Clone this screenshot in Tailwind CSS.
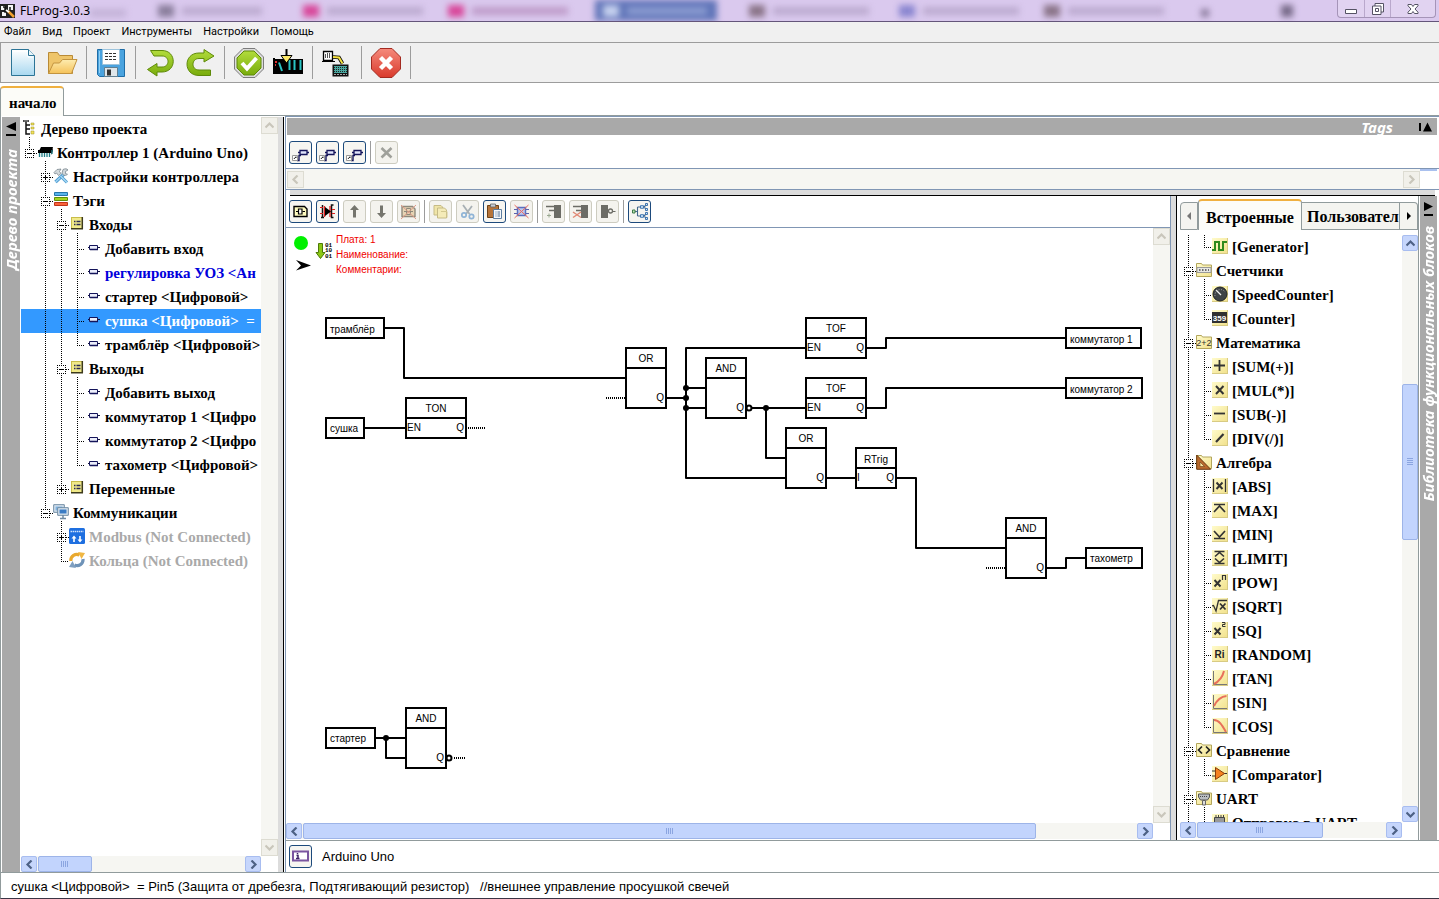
<!DOCTYPE html>
<html lang="ru">
<head>
<meta charset="utf-8">
<title>FLProg-3.0.3</title>
<script src="https://cdn.jsdelivr.net/npm/@tailwindcss/browser@4"></script>
</head>
<body class="flex h-screen flex-col overflow-hidden bg-white text-black">

<!-- Shared gradients -->
<svg class="absolute size-0" aria-hidden="true">
  <defs>
    <linearGradient id="gPage" x1="0" y1="0" x2="0" y2="1"><stop offset="0" stop-color="#fff"/><stop offset="1" stop-color="#a9d8f0"/></linearGradient>
    <linearGradient id="gFold" x1="0" y1="0" x2="0" y2="1"><stop offset="0" stop-color="#fdecb0"/><stop offset="1" stop-color="#f5c25a"/></linearGradient>
    <linearGradient id="gGreen" x1="0" y1="0" x2="0" y2="1"><stop offset="0" stop-color="#b2dc3c"/><stop offset="1" stop-color="#79ac0c"/></linearGradient>
    <linearGradient id="gRed" x1="0" y1="0" x2="0" y2="1"><stop offset="0" stop-color="#f58a7c"/><stop offset="1" stop-color="#d93a2c"/></linearGradient>
    <linearGradient id="gPad" x1="0" y1="0" x2="1" y2="1"><stop offset="0" stop-color="#fffbcb"/><stop offset="1" stop-color="#f2e28e"/></linearGradient>
  </defs>
</svg>

<!-- Icon library -->
<svg class="hidden" aria-hidden="true">
  <symbol id="c-left" viewBox="0 0 9 9"><path d="M6.500 .5 2.500 4.500l4 4" fill="none" stroke="currentColor" stroke-width="2.200"/></symbol>
  <symbol id="c-right" viewBox="0 0 9 9"><path d="m2.500 .5 4 4-4 4" fill="none" stroke="currentColor" stroke-width="2.200"/></symbol>
  <symbol id="c-up" viewBox="0 0 9 9"><path d="m.5 6.500 4-4 4 4" fill="none" stroke="currentColor" stroke-width="2.200"/></symbol>
  <symbol id="c-down" viewBox="0 0 9 9"><path d="m.5 2.500 4 4 4-4" fill="none" stroke="currentColor" stroke-width="2.200"/></symbol>

  <!-- guide cells of the trees, 16x24 -->
  <symbol id="g-v" viewBox="0 0 16 24"><path d="M8.500 0v24" stroke="#000" stroke-dasharray="1 1" shape-rendering="crispEdges"/></symbol>
  <symbol id="g-t" viewBox="0 0 16 24"><path d="M8.500 0v24M8 12.500h8" stroke="#000" stroke-dasharray="1 1" shape-rendering="crispEdges"/></symbol>
  <symbol id="g-l" viewBox="0 0 16 24"><path d="M8.500 0v12M8 12.500h8" stroke="#000" stroke-dasharray="1 1" shape-rendering="crispEdges"/></symbol>
  <symbol id="g-box" viewBox="0 0 16 24"><path d="M4 8.500h9M4 16.500h9M4.500 8v9M12.500 8v9M13 12.500h3" fill="none" stroke="#000" stroke-dasharray="1 1" shape-rendering="crispEdges"/><path d="M6 12.500h5" stroke="#000" shape-rendering="crispEdges"/></symbol>
  <symbol id="g-n" viewBox="0 0 16 24"><path d="M8.500 0v8" stroke="#000" stroke-dasharray="1 1" shape-rendering="crispEdges"/><use href="#g-box"/></symbol>
  <symbol id="g-m" viewBox="0 0 16 24"><path d="M8.500 0v8M8.500 16v8" stroke="#000" stroke-dasharray="1 1" shape-rendering="crispEdges"/><use href="#g-box"/></symbol>
  <symbol id="g-p" viewBox="0 0 16 24"><use href="#g-m"/><path d="M8.500 10v5" stroke="#000" shape-rendering="crispEdges"/></symbol>
  <symbol id="g-q" viewBox="0 0 16 24"><use href="#g-n"/><path d="M8.500 10v5" stroke="#000" shape-rendering="crispEdges"/></symbol>

  <!-- project tree icons -->
  <symbol id="i-root" viewBox="0 0 16 16"><path d="M2 1h6M5 1v13h4M5 5h4M5 9h4" fill="none" stroke="#111" stroke-width="1.500"/><path d="M3 1h4" stroke="#999"/><path d="M10 3h3v2h-3zM10 7h3v2h-3zM10 11h3v3h-3z" fill="#f4e35c" stroke="#9a8c20" stroke-width=".5"/></symbol>
  <symbol id="i-chip" viewBox="0 0 16 16"><path d="M4 3h12l-2 6H1z" fill="#000"/><path d="M1 6h14v3H1z" fill="#000"/><path d="M16 3v4l-2 4v-2" fill="#222"/><path d="M2.500 9v4M5 9v4M7.500 9v4M10 9v4M12.500 9v4M15 6v4" stroke="#1f7d86" stroke-width="1.300"/></symbol>
  <symbol id="i-tools" viewBox="0 0 16 16"><path d="M2.500 14 11 6" stroke="#4f9bd0" stroke-width="3.400"/><path d="M2.500 14 11 6" stroke="#9ed3f3" stroke-width="1.500"/><path d="M10 1.500c2-1 4-1 5 .5L12.500 3.500v2l2 .8c-2 2-5 1-5.500-1.300z" fill="#cfd6da" stroke="#6d7b84" stroke-width=".7"/><path d="M1 4.500 4 1.500 8 1 6.500 3.500 8 5.500 5.500 7.500 3.500 5 2 6z" fill="#d4dadd" stroke="#6d7b84" stroke-width=".7"/><path d="m7.500 8 6.500 6.500" stroke="#4f9bd0" stroke-width="3"/><path d="m7.500 8 6.500 6.500" stroke="#aadcf6" stroke-width="1.300"/></symbol>
  <symbol id="i-tags" viewBox="0 0 16 16"><path d="M1.500 .5h13v3h-13z" fill="#59b4ea" stroke="#2475ab"/><path d="M1.500 5.500h13v3h-13z" fill="#a3d41d" stroke="#5e8f09"/><path d="M1.500 10.500h13v3h-13z" fill="#f8643a" stroke="#c0341a"/></symbol>
  <symbol id="i-list" viewBox="0 0 16 16"><path d="M2 1h12v12H2z" fill="#f1ea8a"/><path d="M2 1.500h11.500M2.500 1v11" stroke="#c9bd4a"/><path d="M2 12.700h12M13.300 1v12" stroke="#3d3a1c" stroke-width="1.500"/><path d="M5 5.500h1.500M5 8.500h1.500M7.500 5.500h4M7.500 8.500h4" stroke="#2a2a55" stroke-width="1.300"/></symbol>
  <symbol id="i-pin" viewBox="0 0 16 16"><path d="M3 7.500h2M12 7.500h3" stroke="#14143c"/><path d="M4.500 5.500h8v4h-8z" fill="#eceefb" stroke="#14145a"/><path d="M5 9.500h8" stroke="#14145a" stroke-width="1.500"/></symbol>
  <symbol id="i-comm" viewBox="0 0 16 16"><path d="M.7 .7h10.600v7.600H.7z" fill="#dbe6ef" stroke="#6e8aa3"/><path d="M2.500 2.500h7v4h-7z" fill="#7fb2e0"/><path d="M4.700 3.700h10.600v7.600H4.700z" fill="#dbe6ef" stroke="#6e8aa3"/><path d="M6.500 5.500h7v4h-7z" fill="#3b7cc4"/><path d="M7 14.500h6M10 11v3" stroke="#6e8aa3" stroke-width="1.500"/></symbol>
  <symbol id="i-modbus" viewBox="0 0 16 16"><rect width="16" height="16" rx="1.500" fill="#1e6fe0"/><path d="M1.500 3.500h13" stroke="#cfe2fb" stroke-width="1.600" stroke-dasharray="1.500 .6"/><path d="M5 14V9M11 8v5" stroke="#fff" stroke-width="1.600"/><path d="M2.500 10.500 5 7.500l2.500 3zM8.500 11.500l2.500 3 2.500-3z" fill="#fff"/></symbol>
  <symbol id="i-ring" viewBox="0 0 16 16"><path d="M1.800 9C1.500 4 6.500 1 10.500 3.200" fill="none" stroke="#e9a92f" stroke-width="3.200"/><path d="m9 0 7 1-3.500 6z" fill="#f0b743"/><path d="M14 7C14.500 12 9.500 15 5.500 12.800" fill="none" stroke="#6f93b8" stroke-width="3.200"/><path d="m7 16-7-1 3.500-6z" fill="#7f9fc0"/></symbol>

  <!-- library icons -->
  <symbol id="pad" viewBox="0 0 16 16"><path d="M0 0h15v15H0z" fill="url(#gPad)"/><path d="M0 15.500h16M15.500 0v16" stroke="#d8cb84"/></symbol>
  <symbol id="folder" viewBox="0 0 16 16"><path d="M.5 1.500h5l1 1.500h9v11.500H.5z" fill="url(#gPad)" stroke="#b3a65c"/></symbol>
  <symbol id="l-gen" viewBox="0 0 16 16"><use href="#pad"/><path d="M0 12h3V4h4v8h4V4h4" fill="none" stroke="#2f8a1c" stroke-width="2"/></symbol>
  <symbol id="l-count" viewBox="0 0 16 16"><use href="#folder"/><path d="M1 5.500h14v5H1z" fill="#e8e8e4" stroke="#999"/><path d="M3 8h10" stroke="#444" stroke-width="1.500" stroke-dasharray="1.500 1.500"/></symbol>
  <symbol id="l-speed" viewBox="0 0 16 16"><use href="#pad"/><circle cx="8" cy="8" r="7" fill="#3d4246" stroke="#1e2124"/><path d="M4 4l5 5" stroke="#f2f2f2" stroke-width="1.300"/><path d="M3 10A5.500 5.500 0 0 1 13 6" fill="none" stroke="#aaa" stroke-dasharray="1 1.500"/></symbol>
  <symbol id="l-359" viewBox="0 0 16 16"><use href="#pad"/><path d="M0 2h15v11H0z" fill="#303030"/><text x="7.500" y="11" text-anchor="middle" font-family="Liberation Sans" font-weight="700" font-size="8" fill="#fff">359</text></symbol>
  <symbol id="l-math" viewBox="0 0 16 16"><use href="#folder"/><text x="8" y="12" text-anchor="middle" font-family="Liberation Sans" font-weight="400" font-size="9" fill="#333">2+2</text></symbol>
  <symbol id="l-sum" viewBox="0 0 16 16"><use href="#pad"/><path d="M2 7.500h11M7.500 2v11" stroke="#333" stroke-width="1.800"/></symbol>
  <symbol id="l-mul" viewBox="0 0 16 16"><use href="#pad"/><path d="m4 4 7.500 8M11.500 4 4 12" stroke="#333" stroke-width="2"/></symbol>
  <symbol id="l-sub" viewBox="0 0 16 16"><use href="#pad"/><path d="M2 7.500h11" stroke="#333" stroke-width="1.800"/></symbol>
  <symbol id="l-div" viewBox="0 0 16 16"><use href="#pad"/><path d="m4 12 7.500-8" stroke="#333" stroke-width="2.200"/></symbol>
  <symbol id="l-alg" viewBox="0 0 16 16"><use href="#folder"/><path d="M.7 1v14.300h14z" fill="#b96a2c" stroke="#6b3a12"/><path d="M4 8v4.500h4.500z" fill="#f5e6a0" stroke="#6b3a12" stroke-width=".6"/></symbol>
  <symbol id="l-abs" viewBox="0 0 16 16"><use href="#pad"/><path d="M1.500 1v13M13.500 1v13" stroke="#333" stroke-width="1.300"/><path d="m4.500 4.500 6 6.500M10.500 4.500l-6 6.500" stroke="#333" stroke-width="1.900"/></symbol>
  <symbol id="l-max" viewBox="0 0 16 16"><use href="#pad"/><path d="M2 2.500h11M2 10l5.500-6 5.500 6" fill="none" stroke="#333" stroke-width="1.700"/></symbol>
  <symbol id="l-min" viewBox="0 0 16 16"><use href="#pad"/><path d="M2 12.500h11M2 5l5.500 6L13 5" fill="none" stroke="#333" stroke-width="1.700"/></symbol>
  <symbol id="l-lim" viewBox="0 0 16 16"><use href="#pad"/><path d="M2.500 1.500h10M2.500 13.500h10M3 6.500l4.500-4 4.500 4M3 8.500l4.500 4 4.500-4" fill="none" stroke="#333" stroke-width="1.600"/></symbol>
  <symbol id="l-pow" viewBox="0 0 16 16"><use href="#pad"/><path d="m2.500 6 6 6.500M8.500 6l-6 6.500" stroke="#333" stroke-width="1.900"/><path d="M10.500 6V1.500h3V6" fill="none" stroke="#333" stroke-width="1.200"/></symbol>
  <symbol id="l-sqrt" viewBox="0 0 16 16"><use href="#pad"/><path d="m0 8 1.500-.5L4 13 6.500 2.500H15" fill="none" stroke="#333" stroke-width="1.300"/><path d="m8 5.500 5.500 6M13.500 5.500l-5.500 6" stroke="#333" stroke-width="1.800"/></symbol>
  <symbol id="l-sq" viewBox="0 0 16 16"><use href="#pad"/><path d="m2.500 6 6 6.500M8.500 6l-6 6.500" stroke="#333" stroke-width="1.900"/><path d="M10 .5h3v2h-2.500v2h3" fill="none" stroke="#333"/></symbol>
  <symbol id="l-ri" viewBox="0 0 16 16"><use href="#pad"/><text x="7.500" y="11.500" text-anchor="middle" font-family="Liberation Sans" font-weight="700" font-size="10" fill="#222">Ri</text></symbol>
  <symbol id="l-tan" viewBox="0 0 16 16"><use href="#pad"/><path d="M1.500 1v13.500H15" fill="none" stroke="#777"/><path d="M2 14C6 12 10 9 12 1" fill="none" stroke="#e8705a" stroke-width="2"/></symbol>
  <symbol id="l-sin" viewBox="0 0 16 16"><use href="#pad"/><path d="M1.500 1v13.500H15" fill="none" stroke="#777"/><path d="M2 12C4 8 8 2.500 14.500 2" fill="none" stroke="#e8705a" stroke-width="2"/></symbol>
  <symbol id="l-cos" viewBox="0 0 16 16"><use href="#pad"/><path d="M1.500 1v13.500H15" fill="none" stroke="#777"/><path d="M2 2c5 0 8 5 12 12" fill="none" stroke="#e8705a" stroke-width="2"/></symbol>
  <symbol id="l-cmp" viewBox="0 0 16 16"><use href="#folder"/><path d="M6 4.500 2.500 8 6 11.500M10 4.500 13.500 8 10 11.500" fill="none" stroke="#222" stroke-width="1.700"/></symbol>
  <symbol id="l-comp" viewBox="0 0 16 16"><use href="#pad"/><path d="M0 5h3M0 10h3M12 7.500h3" stroke="#333"/><path d="M3.500 1.500v12l9-6z" fill="#f58220" stroke="#8a3c08"/></symbol>
  <symbol id="l-uart" viewBox="0 0 16 16"><use href="#folder"/><path d="M2.500 4h11v3l-2 3h-7l-2-3z" fill="#b9bdc1" stroke="#555"/><path d="M4 6.500h8" stroke="#444" stroke-dasharray="1 1"/><path d="M6.500 10.500h3V15h-3z" fill="#ddd" stroke="#666"/></symbol>
  <symbol id="l-send" viewBox="0 0 16 16"><use href="#pad"/><path d="M2.500 3.500h10v8h-10z" fill="#999" stroke="#444"/><path d="M4 1v3M6.500 1v3M9 1v3M11.500 1v3" stroke="#444"/></symbol>

  <!-- small toolbar icons -->
  <symbol id="b-tag" viewBox="0 0 19 19"><path d="M7 9.500h3M15 9.500h3M10 12.500H8v5H6" fill="none" stroke="#14145a" stroke-width="1.400"/><path d="M9 7.500h7v4H9z" fill="#dfe3fa" stroke="#14145a" stroke-width="1.300"/><path d="M1.500 12.500h5v5h-5z" fill="#fff" stroke="#999"/><path d="M3 16c1-2 2-2 2.500-1M4 14.500l1.500-.5" fill="none" stroke="#222"/></symbol>
  <symbol id="b-x" viewBox="0 0 19 19"><path d="m4.500 5 10 9.500M14.500 5l-10 9.500" stroke="#a0a19b" stroke-width="2.600"/></symbol>
  <symbol id="b-sheet" viewBox="0 0 19 19"><path d="M3 4.500h10.500l2.500 2.500v7.500H3z" fill="#fffbc0" stroke="#000" stroke-width="1.400"/><path d="M5 9.500h2M11.500 9.500h2.500" stroke="#000"/><path d="M7.500 7h3.500v5H7.500z" fill="#fff" stroke="#000" stroke-width="1.200"/></symbol>
  <symbol id="b-mux" viewBox="0 0 19 19"><path d="M4.500 3v12.500M3 15.500h3M15.500 3h-2v12.500h2" fill="none" stroke="#111" stroke-width="1.500"/><path d="M6.500 4v11M12 4v11" stroke="#e02020" stroke-width="1.300"/><path d="m7 5 6 4.500-6 4.500z" fill="#000"/><path d="M2 5.500h3M2 11.500h3M14 7.500h3M14 11.500h3" stroke="#e02020"/></symbol>
  <symbol id="b-up" viewBox="0 0 19 19"><path d="M9.500 3 14 8h-3v7.500H8V8H5z" fill="#75756d"/></symbol>
  <symbol id="b-dn" viewBox="0 0 19 19"><path d="M9.500 16 14 11h-3V3.500H8V11H5z" fill="#75756d"/></symbol>
  <symbol id="b-delsheet" viewBox="0 0 19 19"><path d="M3 4.500h10.500l2.500 2.500v7.500H3z" fill="#e6d4b4" stroke="#8f8a7c" stroke-width="1.400"/><path d="M5 9.500h9M7.500 6.500h4v6h-4z" fill="none" stroke="#8f8a7c"/><path d="m2 3 15 14M17 3 2 17" stroke="#df9a86"/></symbol>
  <symbol id="b-copy" viewBox="0 0 19 19"><path d="M3 3.500h7l1.500 1.500v8H3z" fill="#f0e5a8" stroke="#c6bb86"/><path d="M6.500 6h7l2 2v8h-9z" fill="#f4ebb8" stroke="#c6bb86"/><path d="M10 9.500h6v6" fill="none" stroke="#d2c88f"/></symbol>
  <symbol id="b-cut" viewBox="0 0 19 19"><path d="m5 3 6.500 9M14 4l-6 8" stroke="#a8b0b4" stroke-width="1.800"/><circle cx="6" cy="13" r="2.200" fill="none" stroke="#8fb4d6" stroke-width="1.700"/><circle cx="13.500" cy="14.500" r="2.200" fill="none" stroke="#8fb4d6" stroke-width="1.700"/></symbol>
  <symbol id="b-paste" viewBox="0 0 19 19"><path d="M2.500 3.500h11v12h-11z" fill="#b5743a" stroke="#6e4217"/><path d="M5.500 2h5v3h-5z" fill="#c9ced4" stroke="#666" stroke-width=".8"/><path d="M8.500 7.500h8v9h-8z" fill="#f4f8fc" stroke="#5d7da0"/><path d="M10.500 10h1M12.500 10h2.500M10.500 12h1M12.500 12h2.500M10.500 14h1M12.500 14h2.500" stroke="#4d6d90"/></symbol>
  <symbol id="b-delblk" viewBox="0 0 19 19"><path d="M2 7.500h3M2 11.500h3M14 7.500h3M14 11.500h3" stroke="#5b5fae"/><path d="M5.500 5.500h8v8h-8z" fill="#bcc8ef" stroke="#5b6fbe" stroke-width="1.500"/><path d="m2.500 3 14 13M16.500 3l-14 13" stroke="#ee6a5a"/></symbol>
  <symbol id="b-in" viewBox="0 0 19 19"><path d="M10 3h7v13h-7z" fill="#6c6c66"/><path d="M2 4.500h8M5 8.500h5" stroke="#6c6c66" stroke-width="1.500"/><path d="M3 13.500h4M5 11.500v4" stroke="#9aa890"/></symbol>
  <symbol id="b-delin" viewBox="0 0 19 19"><path d="M10 3h7v13h-7z" fill="#6c6c66"/><path d="M2 4.500h8M5 8.500h5" stroke="#6c6c66" stroke-width="1.500"/><path d="m2 10 8 5.500M10 10l-8 5.500" stroke="#e08a76" stroke-width="1.500"/></symbol>
  <symbol id="b-inv" viewBox="0 0 19 19"><path d="M3 3h7v13H3z" fill="#6c6c66"/><circle cx="12.500" cy="9" r="2" fill="none" stroke="#6c6c66" stroke-width="1.300"/><path d="M14.500 9.500h3" stroke="#6c6c66"/></symbol>
  <symbol id="b-tree" viewBox="0 0 19 19"><path d="M4.500 9.500h3M7.500 5v9M7.500 5h3M7.500 14h3M14 5l2-2M14 5l2 2M14 14l2-2M14 14l2 2" fill="none" stroke="#44688f" stroke-width="1.100"/><path d="M2.500 8h2.500v3H2.500z" fill="#bfe6b0" stroke="#3c7a4a"/><path d="M10.500 3.700h3v2.600h-3zM10.500 12.700h3v2.600h-3zM15.500 1.500h2v2h-2zM15.500 6.500h2v2h-2zM15.500 10.500h2v2h-2zM15.500 15.500h2v2h-2z" fill="#cfe6fa" stroke="#2f6aa8" stroke-width=".9"/></symbol>
  <symbol id="b-info" viewBox="0 0 19 19"><path d="M2 4.500h15v9H2z" fill="#fff" stroke="#7a55a0" stroke-width="2"/><path d="M5 11.500h3.500M5.500 8.500H7v3M6.500 6v1.300" fill="none" stroke="#3d2266" stroke-width="1.500"/></symbol>
</svg>

<!-- Title bar -->
<header class="relative flex h-[22px] shrink-0 items-center justify-between overflow-hidden border-b border-[#64557a] bg-[#dac9ee]">
  <div class="pointer-events-none absolute inset-0 flex items-end overflow-hidden pl-[90px] blur-[3px]" aria-hidden="true">
    <div class="flex w-[68px] items-center pb-1"><i class="h-2 w-9 bg-[#c4b3d8]"></i></div>
    <div class="flex w-[145px] items-center gap-2 pb-1"><i class="h-3 w-4 bg-[#8a7e9c]"></i><i class="h-2 w-20 bg-[#bcabd0]"></i></div>
    <div class="flex w-[145px] items-center gap-2 pb-1"><i class="h-3 w-4 bg-[#d8479a]"></i><i class="h-2 w-24 bg-[#bcabd0]"></i></div>
    <div class="flex w-[147px] items-center gap-2 pb-1"><i class="h-3 w-4 bg-[#d8479a]"></i><i class="h-2 w-24 bg-[#bf9cca]"></i></div>
    <div class="flex h-full w-[122px] items-center gap-2 bg-[#5f74b8] px-2"><i class="h-3 w-4 bg-[#c5d0ee]"></i><i class="h-2 w-20 bg-[#8a9bd0]"></i></div>
    <div class="ml-8 flex w-[150px] items-center gap-2 pb-1"><i class="h-3 w-4 bg-[#8a7488]"></i><i class="h-2 w-24 bg-[#bcabd0]"></i></div>
    <div class="flex w-[145px] items-center gap-2 pb-1"><i class="h-3 w-4 bg-[#8a86d0]"></i><i class="h-2 w-24 bg-[#bcabd0]"></i></div>
    <div class="flex w-[145px] items-center gap-2 pb-1"><i class="h-3 w-4 bg-[#8a7488]"></i><i class="h-2 w-24 bg-[#bcabd0]"></i></div>
    <div class="flex w-[80px] items-center pb-1 pl-3"><i class="h-2 w-2 bg-[#8a7b9c]"></i></div>
    <div class="flex w-[80px] items-center pb-1 pl-3"><i class="h-3 w-3 bg-[#776a88]"></i></div>
  </div>
  <h1 class="relative flex items-center gap-1 font-['Noto_Sans'] text-xs">
    <svg class="size-4" viewBox="0 0 16 16"><path d="M0 1h15v14H0z" fill="#222"/><path d="M1 3h4v4H1zM8 2h5v5H8zM2 9h4v4H2z" fill="#f4f4f4"/><path d="M3 4h2v5h4M10 4v6" fill="none" stroke="#111" stroke-width="1.500"/><path d="m8 8 6 6" stroke="#f0a030" stroke-width="2.500"/><path d="M6 7 9 9" stroke="#fff" stroke-width="2"/></svg>
    FLProg-3.0.3
  </h1>
  <div class="relative mr-[3px] flex h-[18px] self-start rounded-b border border-t-0 border-[#a594b8] bg-white/20">
    <button class="flex w-[27px] items-center justify-center border-r border-[#b9a8cc]" aria-label="Свернуть"><svg class="size-3.5" viewBox="0 0 14 14"><path d="M1.500 7.500h11v4h-11z" fill="#fff" stroke="#555364"/></svg></button>
    <button class="flex w-[26px] items-center justify-center border-r border-[#b9a8cc]" aria-label="Восстановить"><svg class="size-3.5" viewBox="0 0 14 14"><path d="M4 1.500h8.500V10H10v2.500H1.500V4H4z" fill="#fff" stroke="#555364"/><path d="M4 4h6v6M4.500 6.500h3v3h-3z" fill="none" stroke="#555364"/></svg></button>
    <button class="flex w-[44px] items-center justify-center" aria-label="Закрыть"><svg class="size-3.5" viewBox="0 0 14 14"><path d="M2 2.500h3.500L7 4.500l1.500-2H12v1.300L9 7l3 3.200v1.300H8.500L7 9.500l-1.500 2H2v-1.300L5 7 2 3.800z" fill="#fff" stroke="#555364"/></svg></button>
  </div>
</header>

<!-- Menu -->
<nav class="flex h-[21px] shrink-0 items-center gap-[11px] border-b border-[#9c9c9c] bg-[#f0f0f0] pt-px pl-1 font-['Roboto'] text-[11px]">
  <button>Файл</button><button>Вид</button><button>Проект</button><button>Инструменты</button><button>Настройки</button><button>Помощь</button>
</nav>

<!-- Main toolbar -->
<div role="toolbar" class="flex h-10 shrink-0 items-stretch border-b border-l border-[#9c9c9c] bg-[#f0f0f0] py-[2px] pl-[2px]">
  <button class="flex w-[39px] items-center justify-center" aria-label="Новый"><svg class="size-8" viewBox="0 0 32 32"><path d="M4.500 2.500h17l6 6v20h-23z" fill="url(#gPage)" stroke="#2c7496"/><path d="M6 4h15v6h5" fill="none" stroke="#fff"/><path d="M21.500 2.500v6h6" fill="#e8f5fb" stroke="#2c7496"/></svg></button>
  <button class="flex w-[39px] items-center justify-center" aria-label="Открыть"><svg class="size-8" viewBox="0 0 32 32"><path d="M2.500 5.500h9l2 3h13v18h-24z" fill="#efc56a" stroke="#b98a36"/><path d="M2.500 26.500 7.500 16h6l3-3.500h14.500l-5.500 14z" fill="url(#gFold)" stroke="#c2933f"/></svg></button>
  <span class="mx-[5px] my-[1px] w-px bg-[#9c9c9c]"></span>
  <button class="flex w-[38px] items-center justify-center" aria-label="Сохранить"><svg class="size-8" viewBox="0 0 32 32"><path d="M2.500 2.500h27v27h-25l-2-2z" fill="#4aa3df" stroke="#1f6da6"/><path d="M4.500 4v22" stroke="#8fd0f5"/><path d="M7.500 2.500h17v15h-17z" fill="#fff" stroke="#9cc3dc"/><path d="M10 6.500h12M10 9.500h12M10 12.500h12" stroke="#333" stroke-dasharray="3 1"/><path d="M9.500 20.500h13v9h-13z" fill="#dfe6ea" stroke="#5f7f92"/><path d="M12 22.500h4v6h-4z" fill="#333"/></svg></button>
  <span class="mx-[5px] my-[1px] w-px bg-[#9c9c9c]"></span>
  <button class="flex w-[39px] items-center justify-center" aria-label="Отменить"><svg class="size-8" viewBox="0 0 32 32"><path d="M5.500 3.500H17c15 0 15 21.500 0 21.500h-5v4L2.500 22.500l9.500-6v3.500h5c8 0 8-11 0-11H9z" fill="url(#gGreen)" stroke="#5f8a0a"/></svg></button>
  <button class="flex w-[39px] items-center justify-center" aria-label="Вернуть"><svg class="size-8" viewBox="0 0 32 32"><path d="M20 2.500 30 9l-10 6v-3.500h-5c-8 0-8 11.500 0 11.500h11.500v5.500H15C-1 28.500-1 6 15 6h5z" fill="url(#gGreen)" stroke="#5f8a0a"/></svg></button>
  <span class="mx-[5px] my-[1px] w-px bg-[#9c9c9c]"></span>
  <button class="flex w-[38px] items-center justify-center" aria-label="Проверить"><svg class="size-8" viewBox="0 0 32 32"><path d="M10 1.500h12l8.500 8.500v12L22 30.500H10L1.500 22V10z" fill="#dcdcdc" stroke="#7b7b7b"/><path d="M11 4h10l7 7v10l-7 7H11l-7-7V11z" fill="url(#gGreen)" stroke="#5f8a0a"/><path d="m9 16 5 5.500L23.500 11" fill="none" stroke="#fff" stroke-width="4"/></svg></button>
  <button class="flex w-[39px] items-center justify-center" aria-label="Компилировать"><svg class="size-8" viewBox="0 0 32 32"><path d="M1 11h2v1h28v15H1z" fill="#000"/><path d="M7 15.500 10 24M22.500 13v10M28.500 13v10M17.500 13v10" stroke="#29c3c3" stroke-width="2"/><path d="M3 15h2M3 18h1" stroke="#e03030" stroke-width="2"/><path d="M14.500 2v8" stroke="#000" stroke-width="2"/><path d="M9 8.500h11L14.500 16z" fill="#fce96a" stroke="#000"/></svg></button>
  <span class="mx-[5px] my-[1px] w-px bg-[#9c9c9c]"></span>
  <button class="flex w-[38px] items-center justify-center" aria-label="Загрузить"><svg class="size-8" viewBox="0 0 32 32"><path d="M2.500 4.500h9v9h-9z" fill="#fff" stroke="#000" stroke-width="1.300"/><path d="M4.500 7v4M6.500 6v5M8.500 6v5" stroke="#555"/><path d="M1 14.500h13" stroke="#000"/><path d="m12 10 6 .5 3.500 6" fill="none" stroke="#000" stroke-width="3.500"/><path d="m12 10 6 .5 3.500 6" fill="none" stroke="#f4e040" stroke-width="2"/><path d="M11.500 17.500h16v12h-16z" fill="#111"/><path d="M13 19h13v7H13z" fill="#49a8a0"/><path d="M13 20.500h13M13 22.500h13M13 24.500h13" stroke="#222" stroke-dasharray="1 1"/><path d="M13 27.500h13" stroke="#aaa" stroke-dasharray="2 1"/></svg></button>
  <span class="mx-[5px] my-[1px] w-px bg-[#9c9c9c]"></span>
  <button class="flex w-[38px] items-center justify-center" aria-label="Закрыть проект"><svg class="size-8" viewBox="0 0 32 32"><path d="M10 1.500h12l8.500 8.500v12L22 30.500H10L1.500 22V10z" fill="url(#gRed)" stroke="#a32a20"/><path d="m10.500 10.500 11 11M21.500 10.500l-11 11" stroke="#fff" stroke-width="4.500"/></svg></button>
  <span class="mx-[5px] my-[1px] w-px bg-[#9c9c9c]"></span>
</div>

<!-- Project tabs -->
<div role="tablist" class="flex h-[33px] shrink-0 items-end">
  <button role="tab" aria-selected="true" class="h-[30px] rounded-t border-x border-t-2 border-[#919b9c] border-t-[#f0b040] bg-[#fcfcf8] pt-[2px] pr-[6px] pl-2 font-['Liberation_Serif'] text-[15px] leading-5 font-bold">начало</button>
  <span class="h-px flex-1 bg-[#919b9c]"></span>
</div>

<main class="flex min-h-0 flex-1 border-b border-[#919b9c]">
  <!-- Project tree panel -->
  <aside class="flex w-[285px] shrink-0 border-l border-[#919b9c] pt-px">
    <div class="ml-px flex w-[18px] shrink-0 flex-col items-center bg-[#a9a9a9]">
      <button class="mt-1 h-[18px]" aria-label="Свернуть дерево"><svg class="h-4 w-3" viewBox="0 0 12 16"><path d="M11 0v9L1 4.500zM1 12h10v2H1z"/></svg></button>
      <span class="mt-[10px] rotate-180 font-['Noto_Sans'] text-[15px] leading-[18px] font-bold text-white italic [writing-mode:vertical-rl]">Дерево проекта</span>
    </div>
    <div class="ml-px flex min-w-0 flex-1 flex-col">
      <div class="flex min-h-0 flex-1">
        <ul id="project" role="tree" class="min-w-0 flex-1 overflow-hidden font-['Liberation_Serif'] text-[15px] font-bold whitespace-pre"></ul>
        <div class="flex w-[17px] flex-col justify-between bg-[#f6f6f2] text-[#c9c6bb]">
          <button class="flex h-[17px] items-center justify-center border border-[#dddcd2] bg-[#f1f0ea]" aria-label="Вверх"><svg class="size-[9px]"><use href="#c-up"/></svg></button>
          <button class="flex h-[17px] items-center justify-center border border-[#dddcd2] bg-[#f1f0ea]" aria-label="Вниз"><svg class="size-[9px]"><use href="#c-down"/></svg></button>
        </div>
      </div>
      <div class="mr-[17px] flex h-4 bg-[#f6f6f2] text-[#4d6185]">
        <button class="flex w-4 items-center justify-center rounded-xs border border-[#a8bdf0] bg-[#c6d6fc]" aria-label="Влево"><svg class="size-[9px]"><use href="#c-left"/></svg></button>
        <div class="flex-1 px-px"><div class="flex h-full w-[26%] items-center justify-center gap-px rounded-xs border border-[#9db4e8] bg-[#c2d4fd]"><i class="h-1.5 w-px bg-[#8ba5e0]"></i><i class="h-1.5 w-px bg-[#8ba5e0]"></i><i class="h-1.5 w-px bg-[#8ba5e0]"></i><i class="h-1.5 w-px bg-[#8ba5e0]"></i></div></div>
        <button class="flex w-4 items-center justify-center rounded-xs border border-[#a8bdf0] bg-[#c6d6fc]" aria-label="Вправо"><svg class="size-[9px]"><use href="#c-right"/></svg></button>
      </div>
    </div>
    <div class="w-[6px] shrink-0 border-r border-black bg-[#dcdcdc]"></div>
    <div class="w-px shrink-0 bg-white"></div>
  </aside>

  <div class="flex min-w-0 flex-1 flex-col border-t border-l border-[#8096b4]">
    <!-- Tags panel -->
    <section class="flex flex-col">
      <div class="mt-px mr-[2px] ml-px flex h-[17px] items-center justify-end gap-6 bg-[#a9a9a9] pr-1">
        <h2 class="font-['Noto_Sans'] text-[15px] leading-4 font-bold text-white italic">Tags</h2>
        <button aria-label="Свернуть теги"><svg class="h-3 w-4" viewBox="0 0 16 12"><path d="M2 2h2v8H2zM6 10.500h9L10.500 1.500z"/></svg></button>
      </div>
      <div class="flex h-[34px] items-center gap-1 border-b border-[#8096b4] pt-px pl-[3px]">
        <button class="size-[23px] rounded-[3px] border border-[#1d4a7c] bg-[#f6f5f1] p-px" aria-label="Тег 1"><svg class="size-[19px]"><use href="#b-tag"/></svg></button>
        <button class="size-[23px] rounded-[3px] border border-[#1d4a7c] bg-[#f6f5f1] p-px" aria-label="Тег 2"><svg class="size-[19px]"><use href="#b-tag"/></svg></button>
        <button class="size-[23px] rounded-[3px] border border-[#1d4a7c] bg-[#f6f5f1] p-px" aria-label="Тег 3"><svg class="size-[19px]"><use href="#b-tag"/></svg></button>
        <span class="h-[23px] w-px bg-[#9c9c9c]"></span>
        <button class="size-[23px] rounded-[3px] border border-[#cdccc0] bg-[#f4f3ee] p-px" aria-label="Удалить тег"><svg class="size-[19px]"><use href="#b-x"/></svg></button>
      </div>
      <div class="flex h-[21px] items-stretch border-b border-[#8096b4] pr-[2px] pl-px text-[#c9c6bb]">
        <div class="flex flex-1 items-center justify-between bg-[#f6f6f2]">
          <button class="flex size-[17px] items-center justify-center border border-[#dddcd2] bg-[#f1f0ea]" aria-label="Влево"><svg class="size-[9px]"><use href="#c-left"/></svg></button>
          <button class="flex size-[17px] items-center justify-center border border-[#dddcd2] bg-[#f1f0ea]" aria-label="Вправо"><svg class="size-[9px]"><use href="#c-right"/></svg></button>
        </div>
        <div class="w-[17px] border-t-2 border-[#a9c0ee]"></div>
      </div>
      <div class="mx-1 h-[6px] border-b border-black bg-[#dcdcdc]"></div>
    </section>

    <div class="flex min-h-0 flex-1 border-b border-[#919b9c]">
      <!-- Board editor -->
      <section class="flex min-w-0 flex-1 flex-col border-r border-[#8096b4] pb-px">
        <div role="toolbar" class="flex h-8 shrink-0 items-center gap-1 border-b border-[#8096b4] pl-[3px]">
          <button class="size-[23px] rounded-[3px] border border-[#1d4a7c] bg-[#f6f5f1] p-px" aria-label="Новая плата"><svg class="size-[19px]"><use href="#b-sheet"/></svg></button>
          <button class="size-[23px] rounded-[3px] border border-[#1d4a7c] bg-[#f6f5f1] p-px" aria-label="Вставить плату"><svg class="size-[19px]"><use href="#b-mux"/></svg></button>
          <button class="size-[23px] rounded-[3px] border border-[#cdccc0] bg-[#f4f3ee] p-px" aria-label="Вверх"><svg class="size-[19px]"><use href="#b-up"/></svg></button>
          <button class="size-[23px] rounded-[3px] border border-[#cdccc0] bg-[#f4f3ee] p-px" aria-label="Вниз"><svg class="size-[19px]"><use href="#b-dn"/></svg></button>
          <button class="size-[23px] rounded-[3px] border border-[#cdccc0] bg-[#f4f3ee] p-px" aria-label="Удалить плату"><svg class="size-[19px]"><use href="#b-delsheet"/></svg></button>
          <span class="h-[23px] w-px bg-[#9c9c9c]"></span>
          <button class="size-[23px] rounded-[3px] border border-[#cdccc0] bg-[#f4f3ee] p-px" aria-label="Копировать"><svg class="size-[19px]"><use href="#b-copy"/></svg></button>
          <button class="size-[23px] rounded-[3px] border border-[#cdccc0] bg-[#f4f3ee] p-px" aria-label="Вырезать"><svg class="size-[19px]"><use href="#b-cut"/></svg></button>
          <button class="size-[23px] rounded-[3px] border border-[#1d4a7c] bg-[#f6f5f1] p-px" aria-label="Вставить"><svg class="size-[19px]"><use href="#b-paste"/></svg></button>
          <button class="size-[23px] rounded-[3px] border border-[#cdccc0] bg-[#f4f3ee] p-px" aria-label="Удалить блок"><svg class="size-[19px]"><use href="#b-delblk"/></svg></button>
          <span class="h-[23px] w-px bg-[#9c9c9c]"></span>
          <button class="size-[23px] rounded-[3px] border border-[#cdccc0] bg-[#f4f3ee] p-px" aria-label="Добавить вход"><svg class="size-[19px]"><use href="#b-in"/></svg></button>
          <button class="size-[23px] rounded-[3px] border border-[#cdccc0] bg-[#f4f3ee] p-px" aria-label="Удалить вход"><svg class="size-[19px]"><use href="#b-delin"/></svg></button>
          <button class="size-[23px] rounded-[3px] border border-[#cdccc0] bg-[#f4f3ee] p-px" aria-label="Инвертировать"><svg class="size-[19px]"><use href="#b-inv"/></svg></button>
          <span class="h-[23px] w-px bg-[#9c9c9c]"></span>
          <button class="size-[23px] rounded-[3px] border border-[#1d4a7c] bg-[#f6f5f1] p-px" aria-label="Структура"><svg class="size-[19px]"><use href="#b-tree"/></svg></button>
        </div>
        <div class="flex min-h-0 flex-1">
          <svg class="h-full min-w-0 flex-1 overflow-hidden font-['Liberation_Sans'] text-[10px]">
            <g transform="translate(-286 -228)">
              <circle cx="301" cy="243" r="7" fill="#00f000"/>
              <path d="m296 260 15 5.500-15 5 5-5z"/>
              <path d="M318.500 243.500h4v9h2.500l-4.500 6-4.500-6h2.500z" fill="#8cc814" stroke="#4d7a08"/>
              <g font-size="6" font-weight="700" class="font-['Liberation_Mono']"><text x="325" y="247">01</text><text x="325" y="252">10</text><text x="325" y="258">01</text></g>
              <g fill="#f00000"><text x="336" y="243">Плата: 1</text><text x="336" y="258">Наименование:</text><text x="336" y="273">Комментарии:</text></g>
              <!-- blocks -->
              <g fill="none" stroke="#000" stroke-width="2">
                <path d="M326 318h58v20h-58zM326 418h38v20h-38zM1066 328h75v20h-75zM1066 378h76v20h-76zM1086 548h56v20h-56zM326 728h49v20h-49z"/>
                <path d="M406 398h60v40h-60zM406 418h60M626 348h40v60h-40zM626 368h40M706 358h40v60h-40zM706 378h40M806 318h60v40h-60zM806 338h60M806 378h60v40h-60zM806 398h60M786 428h40v60h-40zM786 448h40M856 448h40v40h-40zM856 468h40M1006 518h40v60h-40zM1006 538h40M406 708h40v60h-40zM406 728h40"/>
                <!-- wires -->
                <path stroke-linejoin="round" d="M384 328h20v50h222M364 428h42M666 398h20M806 348H686v130h100M686 388h20M686 408h20M752 408h54M766 408v50h20M866 348h20v-10h180M866 408h20v-20h180M826 478h30M896 478h20v70h90M1046 568h20v-10h20M375 738h31M386 738v20h20"/>
                <path stroke-dasharray="1 1" d="M468 428h17M606 398h19M986 568h19M454 758h12"/>
              </g>
              <g fill="#fff" stroke="#000" stroke-width="2"><circle cx="749" cy="408" r="2.500"/><circle cx="449" cy="758" r="2.500"/></g>
              <circle cx="686" cy="388" r="3"/><circle cx="686" cy="398" r="3"/><circle cx="686" cy="408" r="3"/><circle cx="766" cy="408" r="3"/><circle cx="386" cy="738" r="3"/>
              <!-- labels -->
              <text x="330" y="333">трамблёр</text><text x="330" y="432">сушка</text><text x="1070" y="343">коммутатор 1</text><text x="1070" y="393">коммутатор 2</text><text x="1090" y="562">тахометр</text><text x="330" y="742">стартер</text>
              <g text-anchor="middle"><text x="436" y="412">TON</text><text x="646" y="362">OR</text><text x="726" y="372">AND</text><text x="836" y="332">TOF</text><text x="836" y="392">TOF</text><text x="806" y="442">OR</text><text x="876" y="463">RTrig</text><text x="1026" y="532">AND</text><text x="426" y="722">AND</text></g>
              <text x="407" y="431">EN</text><text x="807" y="351">EN</text><text x="807" y="411">EN</text><text x="857" y="481">I</text>
              <g text-anchor="end"><text x="464" y="431">Q</text><text x="664" y="401">Q</text><text x="744" y="411">Q</text><text x="864" y="351">Q</text><text x="864" y="411">Q</text><text x="824" y="481">Q</text><text x="894" y="481">Q</text><text x="1044" y="571">Q</text><text x="444" y="761">Q</text></g>
            </g>
          </svg>
          <div class="flex w-[17px] shrink-0 flex-col justify-between bg-[#f6f6f2] text-[#c9c6bb]">
            <button class="flex h-[17px] items-center justify-center border border-[#dddcd2] bg-[#f1f0ea]" aria-label="Вверх"><svg class="size-[9px]"><use href="#c-up"/></svg></button>
            <button class="flex h-[17px] items-center justify-center border border-[#dddcd2] bg-[#f1f0ea]" aria-label="Вниз"><svg class="size-[9px]"><use href="#c-down"/></svg></button>
          </div>
        </div>
        <div class="mr-[17px] flex h-4 shrink-0 bg-[#f6f6f2] text-[#4d6185]">
          <button class="flex w-4 items-center justify-center rounded-xs border border-[#a8bdf0] bg-[#c6d6fc]" aria-label="Влево"><svg class="size-[9px]"><use href="#c-left"/></svg></button>
          <div class="flex-1 px-px"><div class="flex h-full w-[88%] items-center justify-center gap-px rounded-xs border border-[#9db4e8] bg-[#c2d4fd]"><i class="h-1.5 w-px bg-[#8ba5e0]"></i><i class="h-1.5 w-px bg-[#8ba5e0]"></i><i class="h-1.5 w-px bg-[#8ba5e0]"></i><i class="h-1.5 w-px bg-[#8ba5e0]"></i></div></div>
          <button class="flex w-4 items-center justify-center rounded-xs border border-[#a8bdf0] bg-[#c6d6fc]" aria-label="Вправо"><svg class="size-[9px]"><use href="#c-right"/></svg></button>
        </div>
      </section>
      <div class="w-[6px] shrink-0 border-r border-black bg-[#dcdcdc]"></div>

      <!-- Block library -->
      <section class="flex w-[242px] shrink-0 flex-col border-r border-[#919b9c] pb-[2px]">
        <div role="tablist" class="flex h-[34px] shrink-0 items-end pt-1 pl-[3px] font-['Liberation_Serif'] text-[16px] font-bold">
          <button class="flex h-7 w-[18px] items-center justify-center rounded-tl border border-[#919b9c] bg-[#f4f4f0]" aria-label="Предыдущая вкладка"><svg class="h-2 w-1" viewBox="0 0 4 8"><path d="M4 0v8L0 4z" fill="#777"/></svg></button>
          <button role="tab" aria-selected="true" class="h-[31px] w-[104px] rounded-t border-x border-t-2 border-[#919b9c] border-t-[#f0b040] bg-[#fcfcf8] pt-1 text-center">Встроенные</button>
          <button role="tab" aria-selected="false" class="h-7 min-w-0 flex-1 overflow-hidden border border-l-0 border-[#919b9c] bg-[#f4f4f0] pt-[2px] pl-[5px] text-left whitespace-nowrap">Пользовател</button>
          <button class="flex h-7 w-[18px] items-center justify-center rounded-tr border border-l-0 border-[#919b9c] bg-[#f4f4f0]" aria-label="Следующая вкладка"><svg class="h-2 w-1" viewBox="0 0 4 8"><path d="M0 0v8l4-4z"/></svg></button>
        </div>
        <div class="flex min-h-0 flex-1 pt-[5px] pl-[3px]">
          <ul id="library" role="tree" class="min-w-0 flex-1 overflow-hidden font-['Liberation_Serif'] text-[15px] font-bold whitespace-pre"></ul>
          <div class="flex w-4 shrink-0 flex-col bg-[#f6f6f2] text-[#4d6185]">
            <button class="flex h-4 items-center justify-center rounded-xs border border-[#a8bdf0] bg-[#c6d6fc]" aria-label="Вверх"><svg class="size-[9px]"><use href="#c-up"/></svg></button>
            <div class="flex flex-1 flex-col"><div class="h-[24%]"></div><div class="flex h-[28%] flex-col items-center justify-center gap-px rounded-xs border border-[#9db4e8] bg-[#c2d4fd]"><i class="h-px w-1.5 bg-[#8ba5e0]"></i><i class="h-px w-1.5 bg-[#8ba5e0]"></i><i class="h-px w-1.5 bg-[#8ba5e0]"></i><i class="h-px w-1.5 bg-[#8ba5e0]"></i></div></div>
            <button class="flex h-4 items-center justify-center rounded-xs border border-[#a8bdf0] bg-[#c6d6fc]" aria-label="Вниз"><svg class="size-[9px]"><use href="#c-down"/></svg></button>
          </div>
        </div>
        <div class="mr-4 ml-[3px] flex h-4 shrink-0 bg-[#f6f6f2] text-[#4d6185]">
          <button class="flex w-4 items-center justify-center rounded-xs border border-[#a8bdf0] bg-[#c6d6fc]" aria-label="Влево"><svg class="size-[9px]"><use href="#c-left"/></svg></button>
          <div class="flex-1 px-px"><div class="flex h-full w-[67%] items-center justify-center gap-px rounded-xs border border-[#9db4e8] bg-[#c2d4fd]"><i class="h-1.5 w-px bg-[#8ba5e0]"></i><i class="h-1.5 w-px bg-[#8ba5e0]"></i><i class="h-1.5 w-px bg-[#8ba5e0]"></i><i class="h-1.5 w-px bg-[#8ba5e0]"></i></div></div>
          <button class="flex w-4 items-center justify-center rounded-xs border border-[#a8bdf0] bg-[#c6d6fc]" aria-label="Вправо"><svg class="size-[9px]"><use href="#c-right"/></svg></button>
        </div>
      </section>
      <div class="mr-[2px] ml-px flex w-[17px] shrink-0 flex-col items-center bg-[#a9a9a9]">
        <button class="mt-1 h-[18px]" aria-label="Свернуть библиотеку"><svg class="h-4 w-3" viewBox="0 0 12 16"><path d="M1 1v9l9-4.500zM1 13h9v2H1z"/></svg></button>
        <span class="mt-2 rotate-180 font-['Noto_Sans'] text-[15px] leading-[17px] font-bold whitespace-nowrap text-white italic [writing-mode:vertical-rl]">Библиотека функциональных блоков</span>
      </div>
    </div>

    <div class="flex h-[31px] shrink-0 items-center gap-[10px] pl-[3px] font-['Liberation_Sans'] text-[13px]">
      <button class="size-[23px] rounded-[3px] border border-[#1d4a7c] bg-[#f6f5f1] p-px" aria-label="Контроллер"><svg class="size-[19px]"><use href="#b-info"/></svg></button>
      Arduino Uno
    </div>
  </div>
</main>

<footer class="flex h-[26px] shrink-0 items-center border-b border-l border-[#3a3444] border-l-[#919b9c] pt-[2px] pl-[10px] font-['Liberation_Sans'] text-[13px] whitespace-pre">сушка &lt;Цифровой&gt;  = Pin5 (Защита от дребезга, Подтягивающий резистор)   //внешнее управление просушкой свечей</footer>

<script>
  // Row: [guide cells, icon, label, style]. Guides: v line, t tee, l corner, m/n minus, p/q plus, _ blank.
  const project = [
    ['', 'i-root', 'Дерево проекта'],
    ['n', 'i-chip', 'Контроллер 1 (Arduino Uno)'],
    ['_p', 'i-tools', 'Настройки контроллера'],
    ['_m', 'i-tags', 'Тэги'],
    ['_vm', 'i-list', 'Входы'],
    ['_vvt', 'i-pin', 'Добавить вход'],
    ['_vvt', 'i-pin', 'регулировка УОЗ <Ан', 'blue'],
    ['_vvt', 'i-pin', 'стартер <Цифровой>'],
    ['_vvt', 'i-pin', 'сушка <Цифровой>  =', 'selected'],
    ['_vvl', 'i-pin', 'трамблёр <Цифровой>'],
    ['_vm', 'i-list', 'Выходы'],
    ['_vvt', 'i-pin', 'Добавить выход'],
    ['_vvt', 'i-pin', 'коммутатор 1 <Цифро'],
    ['_vvt', 'i-pin', 'коммутатор 2 <Цифро'],
    ['_vvl', 'i-pin', 'тахометр <Цифровой>'],
    ['_vq', 'i-list', 'Переменные'],
    ['_n', 'i-comm', 'Коммуникации'],
    ['__p', 'i-modbus', 'Modbus (Not Connected)', 'muted'],
    ['__l', 'i-ring', 'Кольца (Not Connected)', 'muted'],
  ];
  const library = [
    ['vl', 'l-gen', '[Generator]'],
    ['m', 'l-count', 'Счетчики'],
    ['vt', 'l-speed', '[SpeedCounter]'],
    ['vl', 'l-359', '[Counter]'],
    ['m', 'l-math', 'Математика'],
    ['vt', 'l-sum', '[SUM(+)]'],
    ['vt', 'l-mul', '[MUL(*)]'],
    ['vt', 'l-sub', '[SUB(-)]'],
    ['vl', 'l-div', '[DIV(/)]'],
    ['m', 'l-alg', 'Алгебра'],
    ['vt', 'l-abs', '[ABS]'],
    ['vt', 'l-max', '[MAX]'],
    ['vt', 'l-min', '[MIN]'],
    ['vt', 'l-lim', '[LIMIT]'],
    ['vt', 'l-pow', '[POW]'],
    ['vt', 'l-sqrt', '[SQRT]'],
    ['vt', 'l-sq', '[SQ]'],
    ['vt', 'l-ri', '[RANDOM]'],
    ['vt', 'l-tan', '[TAN]'],
    ['vt', 'l-sin', '[SIN]'],
    ['vl', 'l-cos', '[COS]'],
    ['m', 'l-cmp', 'Сравнение'],
    ['vl', 'l-comp', '[Comparator]'],
    ['m', 'l-uart', 'UART'],
    ['vt', 'l-send', 'Отправка в UART'],
  ];
  const rowClass = {
    blue: 'flex h-6 items-center text-[#0000dc]',
    selected: 'flex h-6 items-center bg-[#3399ff] text-white',
    muted: 'flex h-6 items-center text-[#a9a9a9]',
  };
  const esc = s => s.replace(/</g, '&lt;').replace(/>/g, '&gt;');
  const row = ([guides, icon, label, style]) => {
    const cells = [...guides].map(g => g === '_'
      ? '<span class="w-4 shrink-0"></span>'
      : `<svg class="h-6 w-4 shrink-0"><use href="#g-${g}"/></svg>`).join('');
    const open = guides === '' || /[mn]$/.test(guides);
    const stub = open ? '<path d="M8.500 20v4" stroke="#000" stroke-dasharray="1 1"/>' : '';
    return `<li role="treeitem" class="${rowClass[style] || 'flex h-6 items-center'}">${cells}` +
      `<svg class="mr-1 h-6 w-4 shrink-0" viewBox="0 0 16 24"><use href="#${icon}" y="3" width="16" height="16"/>${stub}</svg>` +
      `<span>${esc(label)}</span></li>`;
  };
  document.getElementById('project').innerHTML = project.map(row).join('');
  document.getElementById('library').innerHTML = library.map(row).join('');
</script>
</body>
</html>
